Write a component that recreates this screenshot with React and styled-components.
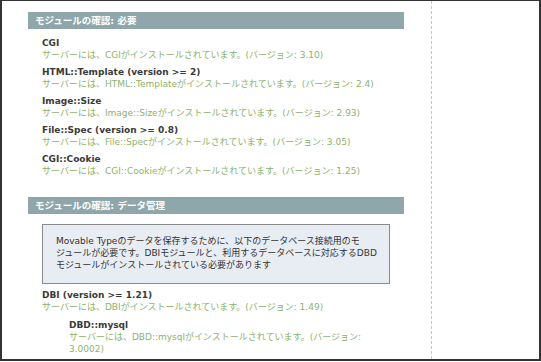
import React from "react";
import styled, { createGlobalStyle } from "styled-components";

const GlobalStyle = createGlobalStyle`
  html, body {
    margin: 0;
    padding: 0;
    background: #ffffff;
  }
  body {
    font-family: "DejaVu Sans", "Noto Sans CJK JP", sans-serif;
  }
`;

const Frame = styled.div`
  box-sizing: border-box;
  width: 541px;
  height: 361px;
  display: flex;
  border-style: solid;
  border-color: #333333;
  border-width: 1px 2px 2px 2px;
  background: #ffffff;
  overflow: hidden;
`;

const Main = styled.div`
  width: 430px;
  flex-shrink: 0;
  box-sizing: border-box;
  padding: 11px 0 0 26px;
  border-right: 1px dashed #b9cad2;
`;

const SectionHeader = styled.h2`
  box-sizing: border-box;
  width: 376px;
  height: 17px;
  margin: 0;
  padding-left: 7px;
  background: #8fa7ab;
  color: #ffffff;
  font-size: 9.5px;
  font-weight: bold;
  line-height: 17px;
`;

const Section = styled.div`
  width: 348px;
  margin: ${(p) => p.$top || 8}px 0 ${(p) => p.$bottom || 0}px 14px;
  display: flex;
  flex-direction: column;
  gap: ${(p) => p.$gap ?? 5}px;
`;

const Module = styled.div`
  padding-left: ${(p) => (p.$nested ? 27 : 0)}px;
  margin-top: ${(p) => p.$space || 0}px;
  font-size: 9px;
  line-height: 12px;
`;

const Name = styled.div`
  color: #3a3a3a;
  font-weight: bold;
`;

const Status = styled.div`
  color: #8db26c;
`;

const InfoBox = styled.div`
  box-sizing: border-box;
  width: 348px;
  height: 60px;
  padding: 10px 0 0 13px;
  background: #e8edf4;
  border: 1px solid #8a8a8a;
  color: #333333;
  font-size: 9px;
  line-height: 12px;
  white-space: nowrap;
`;

const modules = [
  { name: "CGI", version: "3.10" },
  { name: "HTML::Template", need: "2", version: "2.4" },
  { name: "Image::Size", version: "2.93" },
  { name: "File::Spec", need: "0.8", version: "3.05" },
  { name: "CGI::Cookie", version: "1.25" },
];

const ModuleRow = ({ name, need, version, nested, space }) => (
  <Module $nested={nested} $space={space}>
    <Name>
      {name}
      {need ? ` (version >= ${need})` : ""}
    </Name>
    <Status>
      サーバーには、{name}がインストールされています。(バージョン: {version})
    </Status>
  </Module>
);

const App = () => {
  return (
    <>
      <GlobalStyle />
      <Frame>
        <Main>
          <SectionHeader>モジュールの確認: 必要</SectionHeader>
          <Section $bottom={20}>
            {modules.map((m) => (
              <ModuleRow key={m.name} {...m} />
            ))}
          </Section>
          <SectionHeader>モジュールの確認: データ管理</SectionHeader>
          <Section $top={10} $gap={0}>
            <InfoBox>
              Movable Typeのデータを保存するために、以下のデータベース接続用のモ
              <br />
              ジュールが必要です。DBIモジュールと、利用するデータベースに対応するDBD
              <br />
              モジュールがインストールされている必要があります
            </InfoBox>
            <ModuleRow name="DBI" need="1.21" version="1.49" space={5} />
            <ModuleRow name="DBD::mysql" version="3.0002" nested space={6} />
          </Section>
        </Main>
      </Frame>
    </>
  );
};

export default App;
